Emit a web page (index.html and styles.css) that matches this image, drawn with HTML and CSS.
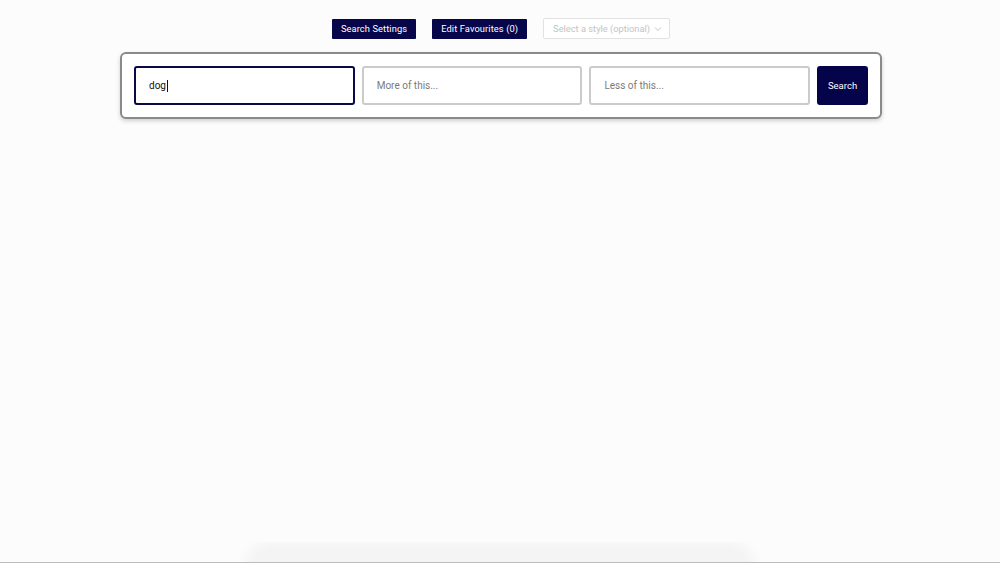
FILE: index.html
```html
<!DOCTYPE html>
<html lang="en">
<head>
    <meta charset="UTF-8">
    <meta name="viewport" content="width=device-width, initial-scale=1.0">
    <title>Search</title>
    <link rel="stylesheet" href="styles.css">
</head>
<body>
    <div class="page">
        <div class="toolbar">
            <button type="button" class="btn">Search Settings</button>
            <button type="button" class="btn">Edit Favourites (0)</button>
            <div class="style-select">
                <span>Select a style (optional)</span>
                <svg width="8" height="6" viewBox="0 0 8 6"><path d="M1 1.5 L4 4.5 L7 1.5" fill="none" stroke="#c4c4c4" stroke-width="1"/></svg>
            </div>
        </div>

        <form class="search-box">
            <div class="field active">dog<span class="caret"></span></div>
            <div class="field placeholder">More of this...</div>
            <div class="field placeholder">Less of this...</div>
            <button type="button" class="search-btn">Search</button>
        </form>

        <div class="bottom">
            <div class="result-card"></div>
        </div>
    </div>
</body>
</html>
```

FILE: styles.css
```css
html, body {
    margin: 0;
    padding: 0;
    background-color: #fcfcfc;
    font-family: Roboto, "Liberation Sans", Arial, sans-serif;
}
.page {
    height: 563px;
    display: flex;
    flex-direction: column;
    align-items: center;
    overflow: hidden;
}
.toolbar {
    display: flex;
    align-items: center;
    gap: 16px;
    margin-top: 18px;
    margin-left: 2px;
}
.btn {
    height: 20px;
    padding: 0 9px;
    background-color: #07064a;
    color: #fff;
    border: none;
    border-radius: 1px;
    font-family: inherit;
    font-size: 9.3px;
    letter-spacing: 0.1px;
    white-space: nowrap;
    cursor: pointer;
}
.style-select {
    box-sizing: border-box;
    width: 127px;
    height: 21px;
    display: flex;
    align-items: center;
    justify-content: space-between;
    padding: 0 7px 0 9px;
    border: 1px solid #e2e2e2;
    border-radius: 2px;
    background-color: #fff;
    color: #c4c4c4;
    font-size: 9.3px;
    white-space: nowrap;
}
.search-box {
    box-sizing: border-box;
    width: 762px;
    height: 67px;
    margin: 13px 0 0 2px;
    padding: 12px;
    display: flex;
    gap: 7px;
    background-color: #fff;
    border: 2px solid #8a8a8a;
    border-radius: 6px;
    box-shadow: 0 2px 4px rgba(0, 0, 0, 0.18);
}
.field {
    box-sizing: border-box;
    width: 221px;
    height: 39px;
    display: flex;
    align-items: center;
    padding: 0 13px;
    border: 2px solid #cbcbcb;
    border-radius: 3px;
    font-size: 10px;
    color: #111;
}
.field.active {
    border-color: #090848;
}
.field.placeholder {
    color: #7a7a7a;
}
.caret {
    display: inline-block;
    width: 1px;
    height: 12px;
    margin-left: 1px;
    background-color: #111;
}
.search-btn {
    width: 51px;
    height: 39px;
    background-color: #05044a;
    color: #fff;
    border: none;
    border-radius: 3px;
    font-family: inherit;
    font-size: 9.5px;
}
.bottom {
    margin-top: auto;
    width: 100%;
    height: 20px;
    display: flex;
    justify-content: center;
    border-bottom: 1px solid #bcbcbc;
    overflow: hidden;
}
.result-card {
    width: 496px;
    height: 40px;
    margin-top: 10px;
    background-color: #f4f4f4;
    border-radius: 30px;
    box-shadow: 0 -2px 14px 8px rgba(0, 0, 0, 0.04);
}
```
